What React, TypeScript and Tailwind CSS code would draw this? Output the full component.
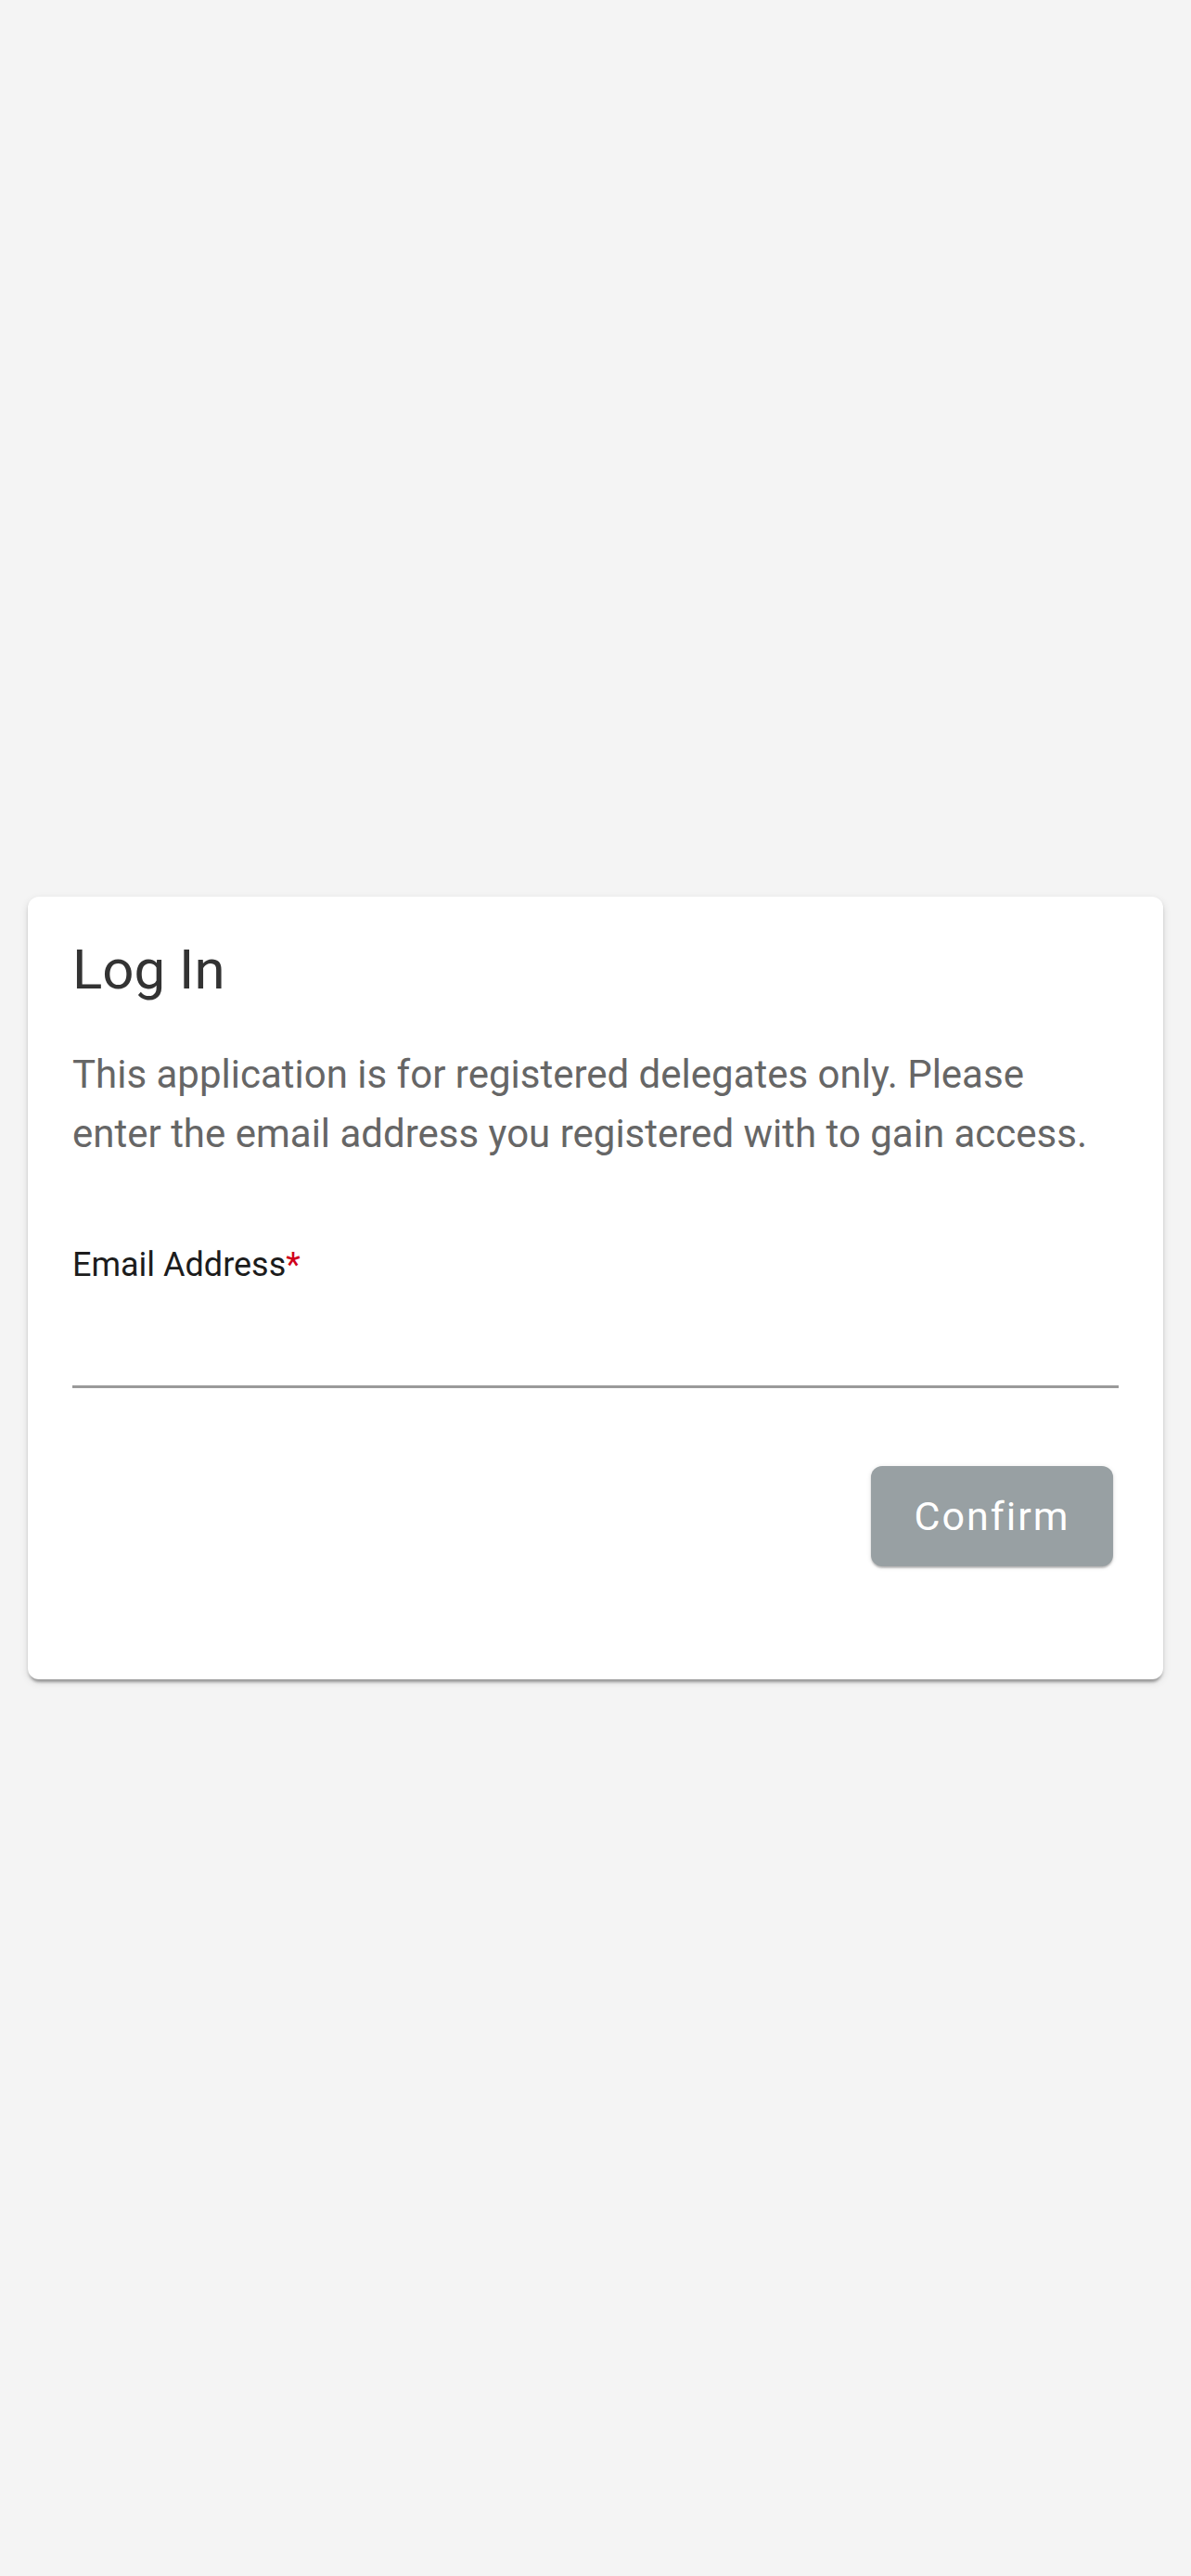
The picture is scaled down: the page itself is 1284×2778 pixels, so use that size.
import React from "react";

export default function App() {
  return (
    <div
      className="flex h-screen w-full items-center justify-center bg-[#f4f4f4] px-[30px]"
      style={{ fontFamily: "Roboto, 'Noto Sans', sans-serif" }}
    >
      <div className="w-full rounded-[12px] bg-white px-[48px] pt-[43px] pb-[122px] shadow-[0_6px_3px_-3px_rgba(0,0,0,0.2),0_3px_3px_0_rgba(0,0,0,0.14),0_3px_9px_0_rgba(0,0,0,0.12)]">
        <h1 className="text-[60px] leading-[72px] font-normal text-[#333333]">Log In</h1>
        <p className="mt-[45px] text-[42px] leading-[64px] text-[#666666]">
          This application is for registered delegates only. Please enter the email address you registered with to gain access.
        </p>
        <div className="mt-[88px]">
          <label className="block text-[36px] leading-[42px] text-[#1c1c1c]">
            Email Address<span className="text-[#d0021b]">*</span>
          </label>
          <input
            type="email"
            className="block h-[112px] w-full border-0 border-b-[3px] border-[#9a9a9a] bg-transparent text-[42px] text-[#333] outline-none"
          />
        </div>
        <div className="mt-[84px] flex justify-end pr-[6px]">
          <button className="h-[108px] w-[261px] rounded-[12px] bg-[#98a0a3] text-[43px] tracking-[2px] text-white shadow-[0_3px_3px_-2px_rgba(0,0,0,0.2),0_2px_2px_0_rgba(0,0,0,0.14),0_1px_5px_0_rgba(0,0,0,0.12)]">
            Confirm
          </button>
        </div>
      </div>
    </div>
  );
}
